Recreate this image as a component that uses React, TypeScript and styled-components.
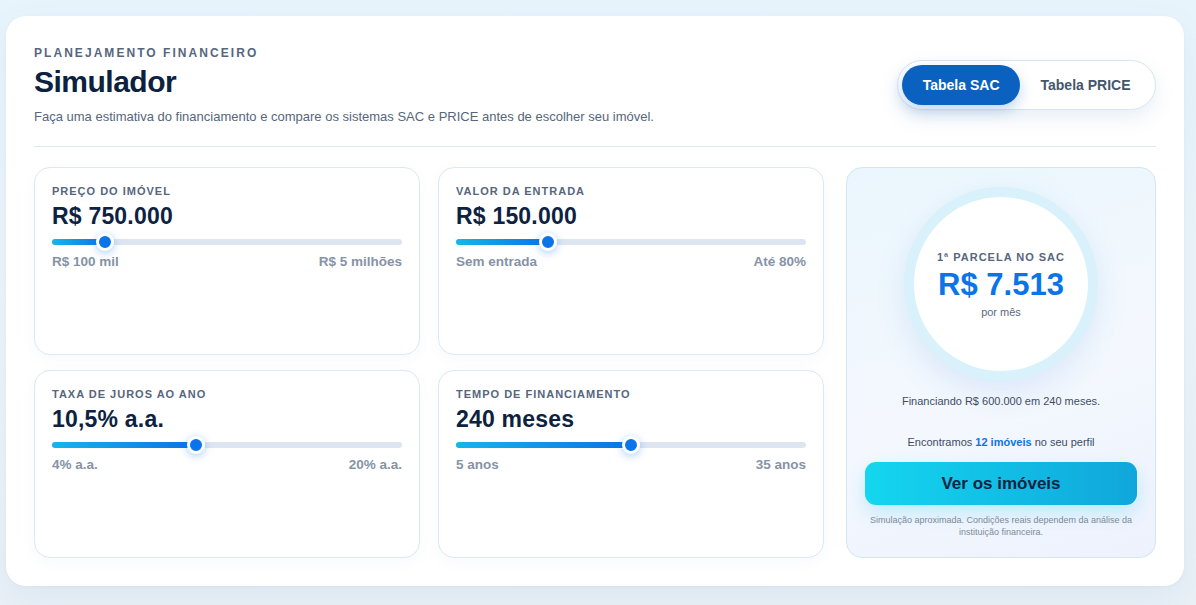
import React from "react";
import styled, { createGlobalStyle } from "styled-components";

const GlobalStyle = createGlobalStyle`
  * { box-sizing: border-box; }
  html, body { margin: 0; padding: 0; }
  body {
    font-family: "Liberation Sans", Arial, sans-serif;
    background: linear-gradient(180deg, #e8f4fc 0%, #eef5fa 50%, #eaf1f7 100%);
    min-height: 605px;
    color: #0f2541;
  }
`;

const Page = styled.div`
  padding: 16px 12px 18px 6px;
`;

const Shell = styled.main`
  background: #ffffff;
  border-radius: 20px;
  padding: 28px;
  box-shadow: 0 12px 34px rgba(40, 110, 170, 0.08), 0 1px 3px rgba(40, 110, 170, 0.05);
`;

const Header = styled.header`
  display: flex;
  align-items: center;
  justify-content: space-between;
  padding-bottom: 20px;
  border-bottom: 1px solid #dde9f3;
`;

const Intro = styled.div`
  display: flex;
  flex-direction: column;
`;

const Eyebrow = styled.div`
  margin-top: 1px;
  font-size: 12px;
  line-height: 16px;
  font-weight: 700;
  letter-spacing: 2.05px;
  color: #56667e;
`;

const Title = styled.h1`
  margin: 3px 0 0;
  font-size: 30px;
  line-height: 36px;
  font-weight: 700;
  letter-spacing: -0.5px;
  color: #0b2140;
`;

const Subtitle = styled.p`
  margin: 8px 0 0;
  font-size: 13px;
  line-height: 18px;
  color: #56667c;
`;

const Toggle = styled.div`
  display: flex;
  padding: 4px;
  border: 1px solid #d9e5f0;
  border-radius: 999px;
  background: #ffffff;
  box-shadow: 0 8px 20px rgba(40, 100, 170, 0.1);
`;

const ToggleButton = styled.button<{ $active?: boolean }>`
  height: 40px;
  padding: 0 20.5px;
  border: none;
  border-radius: 999px;
  font-family: inherit;
  font-size: 14px;
  font-weight: 700;
  cursor: pointer;
  background: ${(p) => (p.$active ? "#0b61bf" : "transparent")};
  color: ${(p) => (p.$active ? "#ffffff" : "#44566c")};
  box-shadow: ${(p) => (p.$active ? "0 6px 14px rgba(11, 97, 191, 0.25)" : "none")};
`;

const Body = styled.section`
  display: grid;
  grid-template-columns: 1fr 310px;
  gap: 22px;
  margin-top: 20px;
`;

const Controls = styled.div`
  display: grid;
  grid-template-columns: 1fr 1fr;
  grid-auto-rows: 188px;
  gap: 15px 18px;
`;

const Card = styled.div`
  background: #ffffff;
  border: 1px solid #dce8f4;
  border-radius: 16px;
  padding: 16px 17px;
  box-shadow: 0 4px 14px rgba(30, 90, 150, 0.04);
`;

const Label = styled.div`
  font-size: 11px;
  line-height: 14px;
  font-weight: 700;
  letter-spacing: 1px;
  color: #56667e;
`;

const Value = styled.div`
  margin-top: 4px;
  font-size: 23px;
  line-height: 28px;
  font-weight: 700;
  color: #0d223f;
  letter-spacing: 0.2px;
`;

const SliderBox = styled.div`
  position: relative;
  height: 20px;
  margin-top: 2px;
  display: flex;
  align-items: center;
`;

const Track = styled.div`
  width: 100%;
  height: 6px;
  border-radius: 3px;
  background: #dde6f0;
`;

const Fill = styled.div`
  position: absolute;
  left: 0;
  top: 7px;
  height: 6px;
  border-radius: 3px;
  background: linear-gradient(90deg, #17b5ea 0%, #0a72e8 100%);
`;

const Thumb = styled.div`
  position: absolute;
  top: 1px;
  width: 18px;
  height: 18px;
  margin-left: -9px;
  border-radius: 50%;
  background: #0b74ea;
  border: 3px solid #ffffff;
  box-shadow: 0 2px 8px rgba(11, 116, 234, 0.35);
`;

const Range = styled.div`
  margin-top: 2px;
  display: flex;
  justify-content: space-between;
  font-size: 13.5px;
  line-height: 16px;
  font-weight: 700;
  color: #8693a6;
`;

const Result = styled.aside`
  display: flex;
  flex-direction: column;
  align-items: center;
  padding: 19px 18px 18px;
  border: 1px solid #d3e6f4;
  border-radius: 16px;
  background: linear-gradient(160deg, #eaf6fd 0%, #f4f8fe 55%, #edf2fd 100%);
`;

const Ring = styled.div`
  width: 194px;
  height: 194px;
  border-radius: 50%;
  border: 10px solid #d8f1fb;
  background: #ffffff;
  display: flex;
  flex-direction: column;
  align-items: center;
  justify-content: center;
  box-shadow: 0 12px 30px rgba(70, 140, 220, 0.14);
`;

const RingLabel = styled.div`
  font-size: 11px;
  line-height: 14px;
  font-weight: 700;
  letter-spacing: 1px;
  color: #56667e;
`;

const RingValue = styled.div`
  margin-top: 4px;
  font-size: 31px;
  line-height: 34px;
  font-weight: 700;
  color: #0a74e8;
`;

const RingSub = styled.div`
  margin-top: 3px;
  font-size: 11px;
  line-height: 14px;
  color: #5b6b80;
`;

const Note = styled.p<{ $gap: number }>`
  margin: ${(p) => p.$gap}px 0 0;
  font-size: 11px;
  line-height: 14px;
  color: #3d4d62;
  text-align: center;
`;

const Highlight = styled.strong`
  color: #0a74e8;
  font-weight: 700;
`;

const CTA = styled.button`
  margin-top: 13px;
  width: 100%;
  height: 43px;
  border: none;
  border-radius: 11px;
  font-family: inherit;
  font-size: 17px;
  font-weight: 700;
  color: #0b2441;
  background: linear-gradient(90deg, #14d6ef 0%, #10a6db 100%);
  box-shadow: 0 8px 18px rgba(20, 200, 240, 0.22);
  cursor: pointer;
`;

const Disclaimer = styled.p`
  margin: 9px 0 0;
  font-size: 9px;
  line-height: 12px;
  color: #7d8a9a;
  text-align: center;
`;

type SliderProps = {
  label: string;
  value: string;
  pct: number;
  min: string;
  max: string;
};

const TRACK_W = 350;
const THUMB = 18;

function SliderCard({ label, value, pct, min, max }: SliderProps) {
  const pos = THUMB / 2 + pct * (TRACK_W - THUMB);
  return (
    <Card>
      <Label>{label}</Label>
      <Value>{value}</Value>
      <SliderBox>
        <Track />
        <Fill style={{ width: pos }} />
        <Thumb style={{ left: pos }} />
      </SliderBox>
      <Range>
        <span>{min}</span>
        <span>{max}</span>
      </Range>
    </Card>
  );
}

export default function App() {
  return (
    <>
      <GlobalStyle />
      <Page>
        <Shell>
          <Header>
            <Intro>
              <Eyebrow>PLANEJAMENTO FINANCEIRO</Eyebrow>
              <Title>Simulador</Title>
              <Subtitle>
                Faça uma estimativa do financiamento e compare os sistemas SAC e PRICE antes de escolher seu imóvel.
              </Subtitle>
            </Intro>
            <Toggle>
              <ToggleButton $active>Tabela SAC</ToggleButton>
              <ToggleButton>Tabela PRICE</ToggleButton>
            </Toggle>
          </Header>
          <Body>
            <Controls>
              <SliderCard
                label="PREÇO DO IMÓVEL"
                value="R$ 750.000"
                pct={(750000 - 100000) / (5000000 - 100000)}
                min="R$ 100 mil"
                max="R$ 5 milhões"
              />
              <SliderCard
                label="VALOR DA ENTRADA"
                value="R$ 150.000"
                pct={150000 / 600000}
                min="Sem entrada"
                max="Até 80%"
              />
              <SliderCard
                label="TAXA DE JUROS AO ANO"
                value="10,5% a.a."
                pct={(10.5 - 4) / (20 - 4)}
                min="4% a.a."
                max="20% a.a."
              />
              <SliderCard
                label="TEMPO DE FINANCIAMENTO"
                value="240 meses"
                pct={(240 - 60) / (420 - 60)}
                min="5 anos"
                max="35 anos"
              />
            </Controls>
            <Result>
              <Ring>
                <RingLabel>1ª PARCELA NO SAC</RingLabel>
                <RingValue>R$ 7.513</RingValue>
                <RingSub>por mês</RingSub>
              </Ring>
              <Note $gap={13}>Financiando R$ 600.000 em 240 meses.</Note>
              <Note $gap={27}>
                Encontramos <Highlight>12 imóveis</Highlight> no seu perfil
              </Note>
              <CTA>Ver os imóveis</CTA>
              <Disclaimer>
                Simulação aproximada. Condições reais dependem da análise da instituição financeira.
              </Disclaimer>
            </Result>
          </Body>
        </Shell>
      </Page>
    </>
  );
}
